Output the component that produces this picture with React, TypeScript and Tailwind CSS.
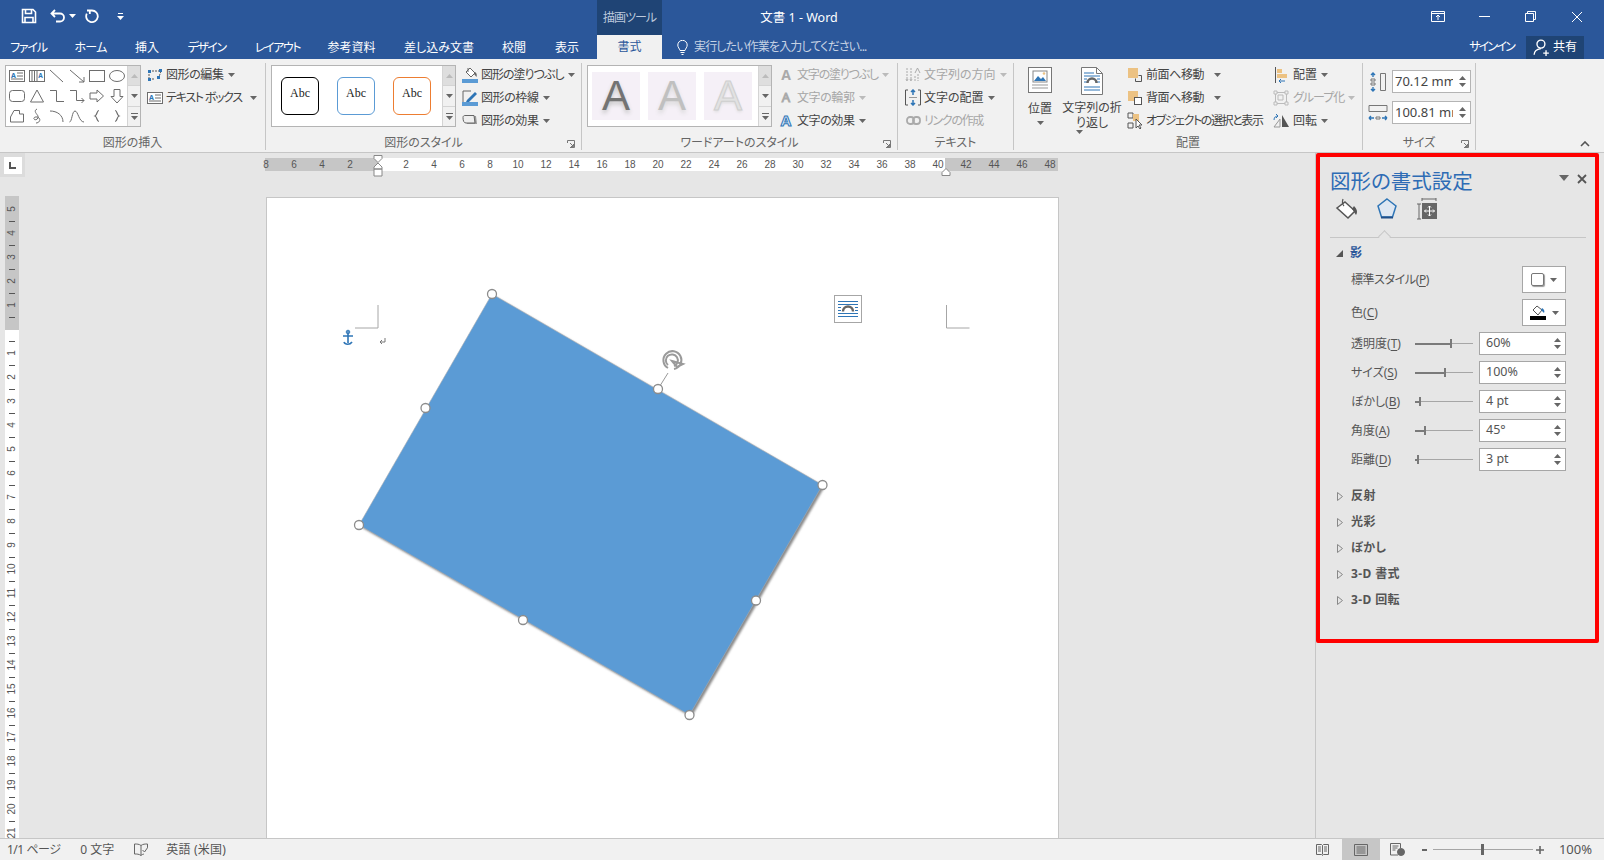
import React from "react";

const fontStack = "font-['Noto_Sans','Noto_Sans_CJK_JP',sans-serif] [font-feature-settings:'palt']";

const tabs = [
  { label: "ファイル", w: "w-[57px] tracking-[-1.2px]" },
  { label: "ホーム", w: "w-[67px] tracking-[-0.7px]" },
  { label: "挿入", w: "w-[46px]" },
  { label: "デザイン", w: "w-[73px] tracking-[-1.5px]" },
  { label: "レイアウト", w: "w-[69px] tracking-[-1.4px]" },
  { label: "参考資料", w: "w-[79px]" },
  { label: "差し込み文書", w: "w-[96px]" },
  { label: "校閲", w: "w-[54px]" },
  { label: "表示", w: "w-[52px]" },
];

function Caret({ color = "#666" }: { color?: string }) {
  return (
    <svg width="7" height="4" viewBox="0 0 7 4" className="shrink-0">
      <path d="M0 0h7L3.5 4z" fill={color} />
    </svg>
  );
}

function TitleBar() {
  return (
    <div className="flex h-[35px] text-white">
      <div className="relative flex w-[597px] items-center pb-[3px] pl-[21px]">
        <svg width="16" height="16" viewBox="0 0 16 16" fill="none" stroke="#fff" strokeWidth="1.6">
          <path d="M1.5 1.5h10.5l2.5 2.5v10.5h-13z" />
          <path d="M4.5 1.5v4h6v-4M4 14.5v-5h8v5" />
        </svg>
        <svg width="16" height="14" viewBox="0 0 16 14" fill="none" stroke="#fff" strokeWidth="1.8" className="ml-[13px]">
          <path d="M5 1L1.5 4.5 5 8M1.5 4.5H10a3.8 3.8 0 0 1 0 8H6" />
        </svg>
        <span className="ml-[3px]"><Caret color="#fff" /></span>
        <svg width="15" height="15" viewBox="0 0 15 15" fill="none" stroke="#fff" strokeWidth="1.8" className="ml-[9px]">
          <path d="M7 1.5h-5M7 1.5a5.8 5.8 0 1 1-5.2 3.2M4.8 1v4" />
        </svg>
        <span className="ml-[17px] flex flex-col items-center gap-[2px]">
          <span className="h-px w-[5px] bg-white" />
          <Caret color="#fff" />
        </span>
      </div>
      <div className="flex w-[65px] items-center justify-center bg-[#1f4475] text-[12px] tracking-[-1px] text-[#bcc9dc]">描画ツール</div>
      <div className="flex w-[274px] items-center justify-center pt-[1px] text-[12.5px]">文書 1 - Word</div>
      <div className="ml-auto mr-[4px] flex pb-[2px]">
        <div className="flex w-[46px] items-center justify-center">
          <svg width="14" height="11" viewBox="0 0 14 11" fill="none" stroke="#fff">
            <path d="M.5.5h13v10H.5zM.5 2.500h13M7 9V4.500M5 6l2-2 2 2" />
          </svg>
        </div>
        <div className="flex w-[46px] items-center justify-center"><span className="h-px w-[11px] bg-white" /></div>
        <div className="flex w-[46px] items-center justify-center">
          <svg width="11" height="11" viewBox="0 0 11 11" fill="none" stroke="#fff">
            <path d="M.5 2.500h8v8h-8zM2.500 2.500v-2h8v8h-2" />
          </svg>
        </div>
        <div className="flex w-[47px] items-center justify-center">
          <svg width="12" height="12" viewBox="0 0 12 12" stroke="#fff"><path d="M1 1l10 10M11 1L1 11" /></svg>
        </div>
      </div>
    </div>
  );
}

function TabRow() {
  return (
    <div className="flex h-[24px] text-[12px] text-white">
      {tabs.map((t) => (
        <div key={t.label} className={`flex items-center justify-center pt-[1px] ${t.w}`}>{t.label}</div>
      ))}
      <div className="ml-[4px] flex w-[65px] items-center justify-center bg-[#f1f1f1] text-[#2b579a]">書式</div>
      <div className="ml-[15px] flex items-center text-[#c6d2e4]">
        <svg width="11" height="15" viewBox="0 0 11 15" fill="none" stroke="#fff">
          <path d="M3 10.500C2.500 8.500.8 7.500.8 5a4.700 4.700 0 0 1 9.400 0c0 2.500-1.700 3.500-2.200 5.500zM3.500 12.500h4M4.500 14.500h2" />
        </svg>
        <span className="ml-[6px] tracking-[-0.85px]">実行したい作業を入力してください...</span>
      </div>
      <div className="ml-auto flex items-center">
        <span className="tracking-[-1.8px]">サインイン</span>
        <div className="ml-[12px] mr-[20px] flex h-[23px] w-[58px] items-center justify-center gap-[3px] bg-[#1f4475]">
          <svg width="17" height="17" viewBox="0 0 15 15" fill="none" stroke="#fff" strokeWidth="1.2">
            <circle cx="7" cy="4.500" r="3.500" />
            <path d="M1 14c0-3 2-5 6-5.500M9 12.500h5M11.500 10v5" />
          </svg>
          <span>共有</span>
        </div>
      </div>
    </div>
  );
}

function Group({ label, className, launcher, children }: { label: string; className: string; launcher?: boolean; children: React.ReactNode }) {
  return (
    <div className={`relative mt-[4px] flex h-[87px] shrink-0 flex-col border-r border-[#c6c6c6] ${className}`}>
      <div className="flex h-[73px]">{children}</div>
      <div className="flex h-[14px] items-center justify-center text-[12px] text-[#666]">{label}</div>
      {launcher && (
        <svg width="8" height="8" viewBox="0 0 8 8" fill="none" stroke="#777" className="absolute bottom-[2px] right-[6px]">
          <path d="M.5 3V.5h7M7.500.5v7H3M3 3l3.500 3.500M6.500 4v2.500H4" />
        </svg>
      )}
    </div>
  );
}

function Btn({ icon, label, disabled, caret, iconW = "w-[18px]", gap = "ml-[2px]", caretGap = "ml-[4px]", track = "" }: { icon: React.ReactNode; label: string; disabled?: boolean; caret?: boolean; iconW?: string; gap?: string; caretGap?: string; track?: string }) {
  return (
    <div className={`flex h-[23px] items-center text-[12px] whitespace-nowrap ${disabled ? "text-[#a6a6a6]" : "text-[#444]"}`}>
      <span className={`flex shrink-0 items-center justify-center ${iconW}`}>{icon}</span>
      <span className={`${gap} ${track}`}>{label}</span>
      {caret && <span className={caretGap}><Caret color={disabled ? "#bbb" : "#666"} /></span>}
    </div>
  );
}

function ScrollCol() {
  return (
    <div className="flex w-[13px] flex-col border-l border-[#d4d4d4] bg-[#f1f1f1]">
      <div className="flex flex-1 items-center justify-center bg-[#dedede]">
        <svg width="7" height="4" viewBox="0 0 7 4"><path d="M3.500 0L7 4H0z" fill="#bbb" /></svg>
      </div>
      <div className="flex flex-1 items-center justify-center border-y border-[#d4d4d4]"><Caret /></div>
      <div className="flex flex-1 flex-col items-center justify-center gap-[2px]">
        <span className="h-px w-[7px] bg-[#666]" />
        <Caret />
      </div>
    </div>
  );
}

const gray = "#6d6d6d";
const shapeIcons: React.ReactNode[] = [
  <><rect x=".5" y="2.500" width="15" height="11" fill="none" stroke={gray} /><text x="2" y="9.500" fontSize="7" fill="#2e75b6" fontWeight="700">A</text><path d="M8 5h6M8 8h6M2 11h12" stroke={gray} /></>,
  <><rect x=".5" y="2.500" width="15" height="11" fill="none" stroke={gray} /><path d="M3 3v10M5.500 3v10M8 3v10" stroke={gray} /><text x="9.300" y="9.500" fontSize="6.500" fill="#2e75b6" fontWeight="700">A</text></>,
  <path d="M1 2l13 12" stroke={gray} fill="none" />,
  <path d="M1 2l14 12M15 14v-5M15 14h-5" stroke={gray} fill="none" />,
  <rect x=".5" y="2.500" width="15" height="11" fill="none" stroke={gray} />,
  <ellipse cx="8" cy="8" rx="7.500" ry="5.500" fill="none" stroke={gray} />,
  <rect x=".5" y="2.500" width="15" height="11" rx="3" fill="none" stroke={gray} />,
  <path d="M8 2l6.500 12h-13z" fill="none" stroke={gray} />,
  <path d="M1 2.500h6.500v11H15" fill="none" stroke={gray} />,
  <path d="M1 2.500h6.500v10H15M12.500 10l2.500 2.500-2.500 2.500" fill="none" stroke={gray} />,
  <path d="M1 5h7V2l6.500 6L8 14v-3H1z" fill="none" stroke={gray} />,
  <path d="M5 1.500h6v7h3l-6 6.500-6-6.500h3z" fill="none" stroke={gray} />,
  <path d="M1.500 9L5 2.500h5.500V6h4v8h-13z" fill="none" stroke={gray} />,
  <path d="M8 1C4 3 8 6 9 8c1 3-3 5-4 3s3-3 5-1 0 5-3 5" fill="none" stroke={gray} />,
  <path d="M1 3c7 0 13 4 13 11" fill="none" stroke={gray} />,
  <path d="M.5 14C3 14 3 3 6 3s4 11 9 11" fill="none" stroke={gray} />,
  <path d="M10 2.500C7.500 2.500 8.500 7 6 8c2.500 1 1.500 5.500 4 5.500" fill="none" stroke={gray} strokeWidth="1.200" />,
  <path d="M6 2.500C8.500 2.500 7.500 7 10 8c-2.500 1-1.500 5.500-4 5.500" fill="none" stroke={gray} strokeWidth="1.200" />,
];

function InsertGroup() {
  return (
    <Group label="図形の挿入" className="w-[266px]">
      <div className="ml-[5px] mt-[2px] flex h-[62px] w-[136px] border border-[#b4b4b4] bg-white">
        <div className="grid w-[121px] grid-cols-6 pl-[1px]">
          {shapeIcons.map((s, i) => (
            <div key={i} className="flex h-[20px] w-[20px] items-center justify-center">
              <svg width="16" height="16" viewBox="0 0 16 16">{s}</svg>
            </div>
          ))}
        </div>
        <ScrollCol />
      </div>
      <div className="ml-[5px] flex flex-col">
        <Btn
          label="図形の編集"
          caret
          track="tracking-[-0.4px]"
          icon={
            <svg width="16" height="14" viewBox="0 0 16 14" fill="none">
              <path d="M2 3h12M2 3l0 8M2 11l5 0M14 3l-2 6" stroke="#555" strokeDasharray="2 1" />
              <path d="M1 2h3v3H1zM12 1h3v3h-3zM1 10h3v3H1zM10 8h3v3h-3z" fill="#2e75b6" />
            </svg>
          }
        />
        <Btn
          label="テキスト ボックス"
          caret
          caretGap="ml-[8px]"
          track="tracking-[-1.250px]"
          icon={
            <svg width="16" height="14" viewBox="0 0 16 14">
              <rect x=".5" y="1.500" width="15" height="11" fill="#fff" stroke={gray} />
              <text x="2" y="8.500" fontSize="7" fill="#2e75b6" fontWeight="700">A</text>
              <path d="M8 4h6M8 7h6M2 10h12" stroke={gray} />
            </svg>
          }
        />
      </div>
    </Group>
  );
}

function BarIcon({ children, bar }: { children: React.ReactNode; bar?: string }) {
  return (
    <svg width="16" height="16" viewBox="0 0 16 16" fill="none">
      {children}
      {bar && <rect x="0" y="12" width="16" height="4" fill={bar} />}
    </svg>
  );
}

function StyleGroup() {
  const boxes = ["border-black", "border-[#5b9bd5]", "border-[#ed7d31]"];
  return (
    <Group label="図形のスタイル" className="w-[316px]" launcher>
      <div className="ml-[5px] mt-[2px] flex h-[62px] w-[185px] border border-[#b4b4b4] bg-white">
        <div className="flex w-[171px] items-center gap-[18px] pl-[9px]">
          {boxes.map((b) => (
            <div key={b} className={`flex h-[38px] w-[38px] items-center justify-center rounded-[6px] border ${b} pb-[6px] font-['Liberation_Serif',serif] text-[12px] font-normal text-[#222]`}>Abc</div>
          ))}
        </div>
        <ScrollCol />
      </div>
      <div className="ml-[5px] flex flex-col">
        <Btn label="図形の塗りつぶし" caret track="tracking-[-1px]" icon={<BarIcon bar="#5b9bd5"><path d="M8 1l5 5-4 4-5-5zM6 1v4" stroke="#666" fill="#fff" /><path d="M13 5c2 1 2 3 1.500 5-1-1-1.500-2-2.500-3z" fill="#666" /></BarIcon>} />
        <Btn label="図形の枠線" caret track="tracking-[-0.4px]" icon={<BarIcon bar="#5b9bd5"><path d="M1 1h8M1 1v11" stroke="#666" /><path d="M5 10l8-8 2 2-8 8-3 0z" fill="#2e75b6" /></BarIcon>} />
        <Btn label="図形の効果" caret track="tracking-[-0.4px]" icon={<svg width="16" height="13" viewBox="0 0 16 13"><path d="M3 2h11l1 8H5z" fill="#999" /><path d="M1 3.500C1 2 2 1.500 3 1.500h9L13 9H4C2 9 1 7 1 3.500z" fill="#eee" stroke="#666" /></svg>} />
      </div>
    </Group>
  );
}

function WordArtGroup() {
  const tiles = [
    { cls: "text-[#737373] [text-shadow:0_3px_4px_#c4c4c4]" },
    { cls: "text-[#c0c0c0] [text-shadow:0_3px_4px_#d8d8d8]" },
    { cls: "text-[#e2e2e2] [-webkit-text-stroke:1px_#cfcfcf] [text-shadow:0_2px_3px_#ddd]" },
  ];
  return (
    <Group label="ワードアートのスタイル" className="w-[316px]" launcher>
      <div className="ml-[5px] mt-[2px] flex h-[62px] w-[185px] border border-[#b4b4b4] bg-white">
        <div className="flex w-[171px] items-center gap-[8px] pl-[4px]">
          {tiles.map((t, i) => (
            <div key={i} className={`flex h-[48px] w-[48px] items-center justify-center bg-[#f5f0f7] font-['Liberation_Sans',sans-serif] text-[42px] leading-none ${t.cls}`}>A</div>
          ))}
        </div>
        <ScrollCol />
      </div>
      <div className="ml-[7px] flex flex-col">
        <Btn label="文字の塗りつぶし" disabled caret track="tracking-[-1.2px]" iconW="w-[14px]" gap="ml-[4px]" icon={<span className="text-[14px] font-bold text-[#aaa]">A</span>} />
        <Btn label="文字の輪郭" disabled caret track="tracking-[-0.4px]" iconW="w-[14px]" gap="ml-[4px]" icon={<span className="text-[13px] text-[#eee] [-webkit-text-stroke:1px_#aaa]">A</span>} />
        <Btn label="文字の効果" caret track="tracking-[-0.4px]" iconW="w-[14px]" gap="ml-[4px]" icon={<span className="text-[15px] font-bold text-[#dce8f6] [-webkit-text-stroke:1px_#2e75b6]">A</span>} />
      </div>
    </Group>
  );
}

function TextGroup() {
  return (
    <Group label="テキスト" className="w-[116px]">
      <div className="ml-[7px] flex flex-col">
        <Btn
          label="文字列の方向"
          disabled
          caret
          iconW="w-[16px]"
          gap="ml-[3px]"
          icon={<svg width="16" height="16" viewBox="0 0 16 16" stroke="#aaa" fill="none"><path d="M2 1v13M6 1v13M1 12l1 2 1-2M5 12l1 2 1-2M13 7v7M10 9v5" strokeDasharray="2 1" /><path d="M10 6l2.500-5L15 6" /></svg>}
        />
        <Btn
          label="文字の配置"
          caret
          iconW="w-[16px]"
          gap="ml-[3px]"
          icon={<svg width="16" height="17" viewBox="0 0 16 17" fill="none"><path d="M3 1H.5v15H3M13 1h2.500v15H13" stroke="#555" /><path d="M8 1v5M6 3l2-2 2 2M8 11v5M6 14l2 2 2-2" stroke="#2e75b6" strokeWidth="1.500" /><path d="M4 8.500h8" stroke="#999" /></svg>}
        />
        <Btn
          label="リンクの作成"
          disabled
          track="tracking-[-1.300px]"
          iconW="w-[16px]"
          gap="ml-[3px]"
          icon={<svg width="15" height="9" viewBox="0 0 15 9" fill="none" stroke="#aaa" strokeWidth="1.800"><rect x="1" y="1" width="7" height="7" rx="3" /><rect x="7" y="1" width="7" height="7" rx="3" /></svg>}
        />
      </div>
    </Group>
  );
}

function ArrangeGroup() {
  const front = <svg width="16" height="16" viewBox="0 0 16 16"><rect x="1" y="1" width="10" height="10" fill="#ecc283" /><path d="M11.500 8.500h3v6h-6v-3" fill="none" stroke="#555" /></svg>;
  const back = <svg width="16" height="16" viewBox="0 0 16 16"><rect x="1" y="1" width="10" height="10" fill="#ecc283" /><rect x="7.500" y="7.500" width="7" height="7" fill="#fff" stroke="#555" /></svg>;
  return (
    <Group label="配置" className="w-[349px]">
      <div className="ml-[14px] flex w-[24px] flex-col items-center pt-[4px] text-[12px] text-[#444]">
        <svg width="24" height="26" viewBox="0 0 24 26" className="shrink-0">
          <rect x=".5" y=".5" width="23" height="25" fill="#fff" stroke="#777" />
          <rect x="5" y="4" width="14" height="11" fill="#fff" stroke="#888" />
          <path d="M6 14l4-5 3 3 2-2 3 4z" fill="#2e75b6" />
          <circle cx="16" cy="6.500" r="1.300" fill="#ecc283" />
          <path d="M4 18h16M4 21h16" stroke="#999" />
        </svg>
        <span className="mt-[8px] whitespace-nowrap leading-[16px]">位置</span>
        <span className="mt-[4px]"><Caret /></span>
      </div>
      <div className="ml-[5px] flex w-[70px] flex-col items-center pt-[4px] text-[12px] leading-[15px] text-[#444]">
        <svg width="22" height="28" viewBox="0 0 22 28" fill="none" className="shrink-0">
          <path d="M.5.500h15l6 6v21H.5z" fill="#fff" stroke="#777" />
          <path d="M15.500.500v6h6" stroke="#777" />
          <path d="M3 6h10M3 9h16M3 12h3M16 12h3M3 15h3M16 15h3M3 20h16M3 23h16" stroke="#2e75b6" />
          <path d="M6.500 16a4.500 4.500 0 0 1 9 0" stroke="#666" strokeWidth="2.500" />
        </svg>
        <span className="mt-[5px] whitespace-nowrap">文字列の折</span>
        <span className="whitespace-nowrap">り返し <Caret /></span>
      </div>
      <div className="flex w-[145px] flex-col">
        <Btn label="前面へ移動" caret caretGap="ml-[10px]" track="tracking-[-0.4px]" iconW="w-[16px]" gap="ml-[3px]" icon={front} />
        <Btn label="背面へ移動" caret caretGap="ml-[10px]" track="tracking-[-0.4px]" iconW="w-[16px]" gap="ml-[3px]" icon={back} />
        <Btn label="オブジェクトの選択と表示" track="tracking-[-1.400px]" iconW="w-[16px]" gap="ml-[3px]" icon={<svg width="16" height="17" viewBox="0 0 16 17" fill="none"><path d="M1 1h5v5H1zM1 11h5v5H1z" stroke="#555" /><rect x="6" y="2" width="6" height="7" fill="#ecc283" /><path d="M9 7v9l2-2 2 3 1-1-2-3h3z" fill="#fff" stroke="#555" /></svg>} />
      </div>
      <div className="flex flex-col">
        <Btn label="配置" caret iconW="w-[18px]" gap="ml-[3px]" icon={<svg width="15" height="16" viewBox="0 0 15 16" fill="none"><path d="M1.500 0v16" stroke="#555" /><rect x="3" y="2" width="5" height="4" fill="#ecc283" /><rect x="3" y="7" width="10" height="4" fill="#ecc283" /><path d="M11 14H5M7 12l-2 2 2 2" stroke="#2e75b6" /></svg>} />
        <Btn label="グループ化" disabled caret track="tracking-[-1px]" iconW="w-[18px]" gap="ml-[3px]" icon={<svg width="16" height="16" viewBox="0 0 16 16" fill="none" stroke="#bbb"><path d="M1 1h3v3H1zM12 1h3v3h-3zM1 12h3v3H1zM12 12h3v3h-3zM4 2.500h8M4 13.500h8M2.500 4v8M13.500 4v8" /><path d="M5 5h5v5H5z" /></svg>} />
        <Btn label="回転" caret iconW="w-[18px]" gap="ml-[3px]" icon={<svg width="16" height="14" viewBox="0 0 16 14" fill="none"><path d="M9 1v12h7z" fill="#555" /><path d="M7 5L1 13h6z" stroke="#999" /><path d="M1 6c0-3 2-4 4-4M3 0l2 2-2 2" stroke="#2e75b6" /></svg>} />
      </div>
    </Group>
  );
}

function SizeField({ value, icon }: { value: string; icon: React.ReactNode }) {
  return (
    <div className="flex items-center">
      <span className="flex w-[27px] justify-center">{icon}</span>
      <div className="ml-[1px] flex h-[23px] w-[79px] items-center border border-[#b4b4b4] bg-white pl-[2px] text-[13px] text-[#444]">
        <span className="w-[58px] overflow-hidden whitespace-nowrap">{value}</span>
        <Spin />
      </div>
    </div>
  );
}

function Spin() {
  return (
    <span className="ml-auto mr-[4px] flex flex-col gap-[3px]">
      <svg width="7" height="4" viewBox="0 0 7 4"><path d="M3.500 0L7 4H0z" fill="#666" /></svg>
      <svg width="7" height="4" viewBox="0 0 7 4"><path d="M0 0h7L3.500 4z" fill="#666" /></svg>
    </span>
  );
}

function SizeGroup() {
  return (
    <Group label="サイズ" className="w-[113px]" launcher>
      <div className="flex flex-col gap-[8px] pt-[7px] pl-[1px]">
        <SizeField
          value="70.12 mm"
          icon={<svg width="17" height="20" viewBox="0 0 17 20" fill="none"><path d="M4 1v4M2 3l2-2 2 2M4 15v4M2 17l2 2 2-2" stroke="#2e75b6" strokeWidth="1.400" /><path d="M2 7h4v2H2zM2 11h4v2H2z" stroke="#777" /><path d="M11.500 1.500h5v17h-5z" stroke="#777" /></svg>}
        />
        <SizeField
          value="100.81 mm"
          icon={<svg width="20" height="18" viewBox="0 0 20 18" fill="none"><path d="M1 1.500h18v6H1z" stroke="#777" /><path d="M1 14h5M1 14l2-2M1 14l2 2M19 14h-5M19 14l-2-2M19 14l-2 2" stroke="#2e75b6" strokeWidth="1.400" /><path d="M8 13h4v2H8z" stroke="#777" /></svg>}
        />
      </div>
    </Group>
  );
}

function Ribbon() {
  return (
    <div className="relative flex h-[94px] border-b border-[#c6c6c6] bg-[#f1f1f1]">
      <InsertGroup />
      <StyleGroup />
      <WordArtGroup />
      <TextGroup />
      <ArrangeGroup />
      <SizeGroup />
      <svg width="10" height="6" viewBox="0 0 10 6" fill="none" stroke="#555" strokeWidth="1.600" className="absolute bottom-[5px] right-[14px]">
        <path d="M1 5l4-4 4 4" />
      </svg>
    </div>
  );
}

const hNums = [8, 6, 4, 2, 0, 2, 4, 6, 8, 10, 12, 14, 16, 18, 20, 22, 24, 26, 28, 30, 32, 34, 36, 38, 40, 42, 44, 46, 48];

function HRuler() {
  return (
    <div className="relative ml-[240px] h-[13px] w-[793px] bg-[linear-gradient(to_right,#c6c6c6_113px,#fff_113px,#fff_680px,#c6c6c6_680px)]">
      <div className="ml-[-13px] flex h-full w-[840px] overflow-visible">
        {hNums.map((n, i) => (
          <span key={i} className="flex h-full w-[28px] shrink-0 items-center justify-center font-['Liberation_Sans',sans-serif] text-[10px] text-[#555]">
            {i === 4 ? "" : n}
          </span>
        ))}
      </div>
      <svg width="10" height="26" viewBox="0 0 10 26" fill="#fff" stroke="#888" className="absolute left-[108px] top-[-3px]">
        <path d="M1 .5h8v3L5 7.500 1 3.500zM5 8l4 4v2H1v-2zM1 14h8v7H1z" />
      </svg>
      <svg width="10" height="8" viewBox="0 0 10 8" fill="#fff" stroke="#888" className="absolute left-[676px] top-[10px]">
        <path d="M5 .5l4 4v3H1v-3z" />
      </svg>
    </div>
  );
}

const vNums: string[] = ["5", "", "4", "", "3", "", "2", "", "1", "", " ", ""];
for (let i = 1; i <= 21; i++) {
  vNums.push(String(i));
  vNums.push("");
}

function VRuler() {
  return (
    <div className="ml-[5px] h-full w-[14px] shrink-0 overflow-hidden bg-[linear-gradient(to_bottom,#c6c6c6_134px,#fff_134px)] pt-[7px]">
      {vNums.map((n, i) => (
        <div key={i} className="flex h-[12px] items-center justify-center font-['Liberation_Sans',sans-serif] text-[10px] leading-none text-[#555]">
          {n === "" ? <span className="h-px w-[6px] bg-[#555]" /> : <span className="-rotate-90 whitespace-nowrap">{n.trim()}</span>}
        </div>
      ))}
    </div>
  );
}

function Handle({ x, y }: { x: number; y: number }) {
  return <circle cx={x} cy={y} r="4.500" fill="#fff" stroke="#8c8c8c" strokeWidth="1.300" />;
}

function Page() {
  return (
    <div className="relative ml-[247px] mt-[1px] w-[793px] shrink-0 border-x border-t border-[#c6c6c6] bg-white">
      <svg width="791" height="641" viewBox="267 198 791 641" className="absolute left-0 top-0">
        <defs>
          <filter id="soft" x="-5%" y="-5%" width="110%" height="110%">
            <feGaussianBlur stdDeviation="1" />
          </filter>
        </defs>
        <path d="M378 305v23h-23M946.500 305v23h23" fill="none" stroke="#a6a6a6" />
        <path d="M348 331v12M344 342c1 3 6 3 8 0M343 336h10" stroke="#2e75b6" strokeWidth="1.600" fill="none" />
        <circle cx="348" cy="332" r="1.800" fill="none" stroke="#2e75b6" />
        <path d="M385 338v4h-5M382 340l-2 2 2 2" fill="none" stroke="#777" />
        <polygon points="494,296 824.500,487 691.500,717 361,527" fill="#8a8a8a" filter="url(#soft)" />
        <polygon points="492,294 822.500,485 689.500,715 359,525" fill="#5b9bd5" stroke="#a9adb1" strokeWidth=".6" />
        <path d="M658 389l10-16" stroke="#999" />
        <path d="M668 368a9 9 0 1 1 6 1M668 365a6 6 0 1 1 6 1M672 361l11 3-6 3z" fill="none" stroke="#9a9a9a" strokeWidth="2" />
        <Handle x={492} y={294} />
        <Handle x={822.500} y={485} />
        <Handle x={689.500} y={715} />
        <Handle x={359} y={525} />
        <Handle x={658} y={389} />
        <Handle x={756} y={600.500} />
        <Handle x={523} y={620} />
        <Handle x={425.500} y={408} />
      </svg>
      <div className="absolute left-[567px] top-[97px] flex h-[28px] w-[28px] items-center justify-center border border-[#a6a6a6] bg-white">
        <svg width="20" height="20" viewBox="0 0 20 20" fill="none">
          <path d="M0 2.500h20M0 5.500h20M0 8.500h3M17 8.500h3M0 11.500h3M17 11.500h3M0 14.500h20M0 17.500h20" stroke="#2e75b6" />
          <path d="M5 12.500a5 5 0 0 1 10 0" stroke="#666" strokeWidth="2.400" />
        </svg>
      </div>
    </div>
  );
}

const sliders = [
  { label: "透明度", key: "T", value: "60%", thumb: 35 },
  { label: "サイズ", key: "S", value: "100%", thumb: 29 },
  { label: "ぼかし", key: "B", value: "4 pt", thumb: 4 },
  { label: "角度", key: "A", value: "45°", thumb: 9 },
  { label: "距離", key: "D", value: "3 pt", thumb: 2 },
];

const collapsed = ["反射", "光彩", "ぼかし", "3-D 書式", "3-D 回転"];

function Shortcut({ label, k, track = "" }: { label: string; k: string; track?: string }) {
  return (
    <span className={`whitespace-nowrap text-[12px] leading-[16px] text-[#555] ${track}`}>
      {label}(<span className="underline underline-offset-2">{k}</span>)
    </span>
  );
}

function PickButton({ children }: { children: React.ReactNode }) {
  return (
    <div className="ml-auto flex h-[27px] w-[44px] items-center justify-center gap-[6px] border border-[#a6a6a6] bg-white">
      {children}
      <Caret />
    </div>
  );
}

function FormatPane() {
  return (
    <div className="h-full w-[289px] shrink-0 border-l border-[#c6c6c6] bg-[#e6e6e6]">
      <div className="box-border h-[490px] w-[283px] rounded-[2px] border-4 border-[#ff0000] pl-[10px]">
        <div className="mt-[10px] flex h-[28px] items-center">
          <span className="text-[20.500px] leading-none text-[#2e6cb5]">図形の書式設定</span>
          <span className="ml-auto mb-[6px]">
            <svg width="10" height="6" viewBox="0 0 10 6"><path d="M0 0h10L5 6z" fill="#666" /></svg>
          </span>
          <svg width="10" height="10" viewBox="0 0 10 10" stroke="#555" strokeWidth="1.800" className="mb-[4px] ml-[8px] mr-[8px]"><path d="M1 1l8 8M9 1L1 9" /></svg>
        </div>
        <div className="mt-[2px] flex h-[24px] items-center pl-[4px]">
          <svg width="24" height="24" viewBox="0 0 24 24" fill="none">
            <path d="M11 5l10 9-7 7-11-10z" fill="#fff" stroke="#555" strokeWidth="1.500" />
            <path d="M9 2c-1 3-1 5 1 7" stroke="#555" strokeWidth="1.200" />
            <path d="M20 9c3 3 4 6 2 9-2-3-3-5-4-6z" fill="#555" />
          </svg>
          <svg width="22" height="24" viewBox="0 0 22 24" fill="none" className="ml-[18px]">
            <path d="M11 2l9 7-3.500 11h-11L2 9z" fill="#dee7f2" stroke="#2e75b6" strokeWidth="1.500" />
            <path d="M5 20.500h12" stroke="#1f4e8a" strokeWidth="2" />
          </svg>
          <svg width="22" height="22" viewBox="0 0 22 22" fill="none" className="ml-[18px]">
            <path d="M6 1h14M6 0v3M20 0v3M1 6h4M3 6v15M1 21h4" stroke="#666" />
            <rect x="6" y="5" width="15" height="16" fill="#666" />
            <path d="M13.500 8v10M8.500 13h10M12 9.500l1.500-1.500 1.500 1.500M12 16.500l1.500 1.500 1.500-1.500M10 11.500L8.500 13l1.500 1.500M17 11.500l1.500 1.500-1.500 1.500" stroke="#fff" />
          </svg>
        </div>
        <div className="relative mr-[9px] mt-[16px] h-px bg-[#c6c6c6]">
          <span className="absolute left-[50px] top-[-5px] h-[9px] w-[9px] rotate-45 border-l border-t border-[#c6c6c6] bg-[#e6e6e6]" />
        </div>
        <div className="mt-[7px] flex h-[16px] items-center pl-[6px]">
          <svg width="7" height="7" viewBox="0 0 7 7"><path d="M7 0v7H0z" fill="#555" /></svg>
          <span className="ml-[7px] text-[12px] font-bold text-[#2b579a]">影</span>
        </div>
        <div className="mt-[5px] flex h-[27px] items-center pl-[21px] pr-[29px]">
          <Shortcut label="標準スタイル" k="P" track="tracking-[-0.4px]" />
          <PickButton>
            <span className="h-[13px] w-[13px] rounded-[2px] border border-[#777] bg-white shadow-[1px_1px_1px_#999]" />
          </PickButton>
        </div>
        <div className="mt-[6px] flex h-[27px] items-center pl-[21px] pr-[29px]">
          <Shortcut label="色" k="C" />
          <PickButton>
            <span className="flex w-[16px] flex-col items-center">
              <svg width="14" height="11" viewBox="0 0 14 11" fill="none">
                <path d="M6 1l5 4-4 5-5-5z" fill="#fff" stroke="#555" />
                <path d="M11 3c2 1 3 3 2 5-1-1-2-2-3-3z" fill="#2e75b6" />
              </svg>
              <span className="h-[4px] w-[16px] bg-black" />
            </span>
          </PickButton>
        </div>
        <div className="mt-[6px] flex flex-col gap-[6px]">
          {sliders.map((s) => (
            <div key={s.label} className="flex h-[23px] items-center pl-[21px] pr-[29px]">
              <span className="flex w-[64px] items-center"><Shortcut label={s.label} k={s.key} /></span>
              <div className="relative flex h-[9px] w-[58px] items-center bg-[linear-gradient(#a6a6a6,#a6a6a6)] bg-[length:100%_1px] bg-center bg-no-repeat">
                <span className="h-[2px] bg-[#7a7a7a]" style={{ width: s.thumb }} />
                <span className="h-[9px] w-[2px] bg-[#7a7a7a]" />
              </div>
              <div className="ml-[6px] flex h-[23px] w-[87px] items-center border border-[#a6a6a6] bg-white pl-[6px] text-[12.500px] text-[#555]">
                <span>{s.value}</span>
                <Spin />
              </div>
            </div>
          ))}
        </div>
        <div className="mt-[12px] flex flex-col">
          {collapsed.map((c) => (
            <div key={c} className="flex h-[26px] items-center pl-[7px]">
              <svg width="6" height="9" viewBox="0 0 6 9" fill="none" stroke="#888"><path d="M.5.500l5 4-5 4z" /></svg>
              <span className="ml-[8px] text-[12px] font-bold tracking-[0.4px] text-[#555]">{c}</span>
            </div>
          ))}
        </div>
      </div>
    </div>
  );
}

function Workspace() {
  return (
    <div className="flex w-[1315px] shrink-0 flex-col overflow-hidden">
      <div className="flex h-[43px] items-start">
        <div className="flex h-[24px] w-[25px] items-center justify-center bg-[#dcdcdc]">
          <div className="flex h-[17px] w-[18px] items-center justify-center bg-white">
            <svg width="7" height="7" viewBox="0 0 7 7" fill="none" stroke="#555" strokeWidth="2"><path d="M1 0v6h6" /></svg>
          </div>
        </div>
        <div className="mt-[5px]"><HRuler /></div>
      </div>
      <div className="flex min-h-0 flex-1">
        <VRuler />
        <Page />
      </div>
    </div>
  );
}

function StatusBar() {
  return (
    <div className="flex h-[22px] items-center border-t border-[#c6c6c6] bg-[#f1f1f1] pl-[7px] text-[12px] text-[#555]">
      <span className="tracking-[-0.5px]">1/1 ページ</span>
      <span className="ml-[20px]">0 文字</span>
      <svg width="14" height="13" viewBox="0 0 14 13" fill="none" stroke="#666" className="ml-[20px]">
        <path d="M7 2.500C5 1 3 1 .5 1v10C3 11 5 11 7 12.500V2.500zM7 2.500C9 1 11 1 13.500 1v3M7 12.500c1-1 2-1.300 3-1.400M8.500 7l2 2L14 4" />
      </svg>
      <span className="ml-[18px] tracking-[0.2px]">英語 (米国)</span>
      <div className="ml-auto flex h-full items-center">
        <svg width="13" height="12" viewBox="0 0 13 12" fill="none" stroke="#666">
          <path d="M.5.500h5l1 1 1-1h5v10h-5l-1 1-1-1h-5zM6.500 1.500v9M2 3h3M2 5h3M2 7h3M8 3h3M8 5h3M8 7h3" />
        </svg>
        <div className="ml-[13px] flex h-full w-[38px] items-center justify-center bg-[#c6c6c6]">
          <svg width="14" height="12" viewBox="0 0 14 12" fill="none" stroke="#666">
            <path d="M.5.500h13v11H.5zM2.500 3h9M2.500 5h9M2.500 7h9M2.500 9h9" />
          </svg>
        </div>
        <svg width="15" height="13" viewBox="0 0 15 13" fill="none" stroke="#666" className="ml-[10px]">
          <path d="M8 12H.5V.5h10V5M2.500 3h6M2.500 5h5M2.500 7h3" />
          <circle cx="11" cy="9" r="3.500" fill="#666" />
        </svg>
        <span className="ml-[17px] h-[2px] w-[5px] bg-[#666]" />
        <div className="ml-[6px] flex h-[9px] w-[100px] items-center bg-[linear-gradient(#a6a6a6,#a6a6a6)] bg-[length:100%_1px] bg-center bg-no-repeat pl-[48px]">
          <span className="h-[11px] w-[3px] bg-[#666]" />
        </div>
        <svg width="8" height="8" viewBox="0 0 8 8" stroke="#666" strokeWidth="1.600" className="ml-[3px]"><path d="M0 4h8M4 0v8" /></svg>
        <span className="ml-[15px] mr-[12px] text-[13px]">100%</span>
      </div>
    </div>
  );
}

export default function App() {
  return (
    <div className={`flex h-screen w-full flex-col overflow-hidden bg-[#e6e6e6] ${fontStack}`}>
      <div className="bg-[#2b579a]">
        <TitleBar />
        <TabRow />
      </div>
      <Ribbon />
      <div className="flex min-h-0 flex-1">
        <Workspace />
        <FormatPane />
      </div>
      <StatusBar />
    </div>
  );
}
